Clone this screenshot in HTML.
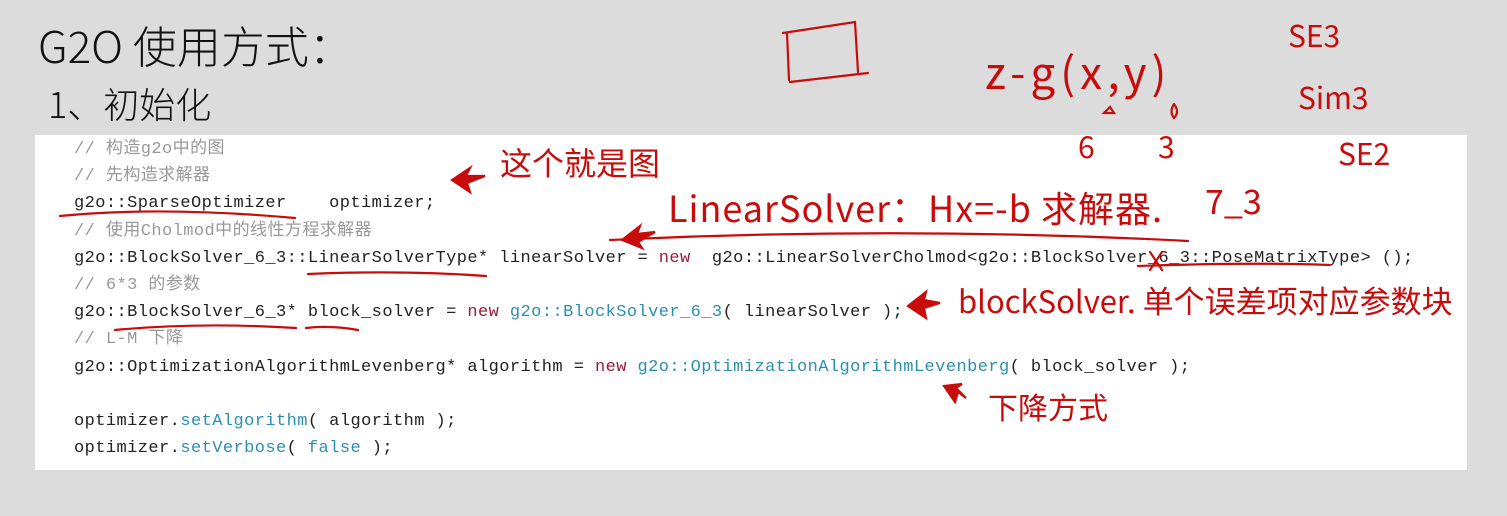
<!DOCTYPE html>
<html><head><meta charset="utf-8"><style>
body{margin:0;width:1507px;height:516px;background:#dcdcdc;position:relative;overflow:hidden;font-family:"Liberation Sans","Noto Sans CJK SC",sans-serif}
.box{position:absolute;left:35px;top:135px;width:1432px;height:335px;background:#fff}
.code{position:absolute;left:74px;top:136px;font-family:"Liberation Mono","Noto Sans CJK SC",monospace;font-size:17px;letter-spacing:0.43px;line-height:27.2px;color:#222;white-space:pre}
.c{color:#999}.k{color:#9b1b3b}.t{color:#2b8fb0}
.hw{position:absolute;color:#111;font-family:"Noto Sans CJK SC",sans-serif;font-weight:300;white-space:nowrap}
.r{position:absolute;color:#c80c0c;font-family:"Noto Sans CJK SC",sans-serif;font-weight:400;white-space:nowrap}
svg{position:absolute;left:0;top:0}
</style></head><body>
<div class="box"></div>
<div class="hw" style="left:38px;top:14px;font-size:44px;line-height:60px">G2O 使用方式：</div>
<div class="hw" style="left:48px;top:78px;font-size:36px;line-height:50px">1、初始化</div>
<div class="code"><span class="c">// 构造g2o中的图</span>
<span class="c">// 先构造求解器</span>
g2o::SparseOptimizer    optimizer;
<span class="c">// 使用Cholmod中的线性方程求解器</span>
g2o::BlockSolver_6_3::LinearSolverType* linearSolver = <span class="k">new</span>  g2o::LinearSolverCholmod&lt;g2o::BlockSolver_6_3::PoseMatrixType&gt; ();
<span class="c">// 6*3 的参数</span>
g2o::BlockSolver_6_3* block_solver = <span class="k">new</span> <span class="t">g2o::BlockSolver_6_3</span>( linearSolver );
<span class="c">// L-M 下降</span>
g2o::OptimizationAlgorithmLevenberg* algorithm = <span class="k">new</span> <span class="t">g2o::OptimizationAlgorithmLevenberg</span>( block_solver );

optimizer.<span class="t">setAlgorithm</span>( algorithm );
optimizer.<span class="t">setVerbose</span>( <span class="t">false</span> );</div>
<div class="r" style="left:500px;top:142px;font-size:32px;line-height:40px">这个就是图</div>
<div class="r" style="left:668px;top:184px;font-size:36px;line-height:46px;letter-spacing:1px">LinearSolver：Hx=-b 求解器.</div>
<div class="r" style="left:1205px;top:178px;font-size:34px;line-height:44px">7_3</div>
<div class="r" style="left:958px;top:279px;font-size:31px;line-height:42px">blockSolver. 单个误差项对应参数块</div>
<div class="r" style="left:988px;top:386px;font-size:30px;line-height:40px">下降方式</div>
<div class="r" style="left:985px;top:40px;font-size:44px;line-height:60px;letter-spacing:5px">z-g(x,y)</div>
<div class="r" style="left:1078px;top:125px;font-size:30px;line-height:40px">6</div>
<div class="r" style="left:1158px;top:125px;font-size:30px;line-height:40px">3</div>
<div class="r" style="left:1288px;top:14px;font-size:30px;line-height:40px">SE3</div>
<div class="r" style="left:1298px;top:76px;font-size:30px;line-height:40px">Sim3</div>
<div class="r" style="left:1338px;top:132px;font-size:30px;line-height:40px">SE2</div>
<svg width="1507" height="516" fill="none" stroke="#c80c0c" stroke-width="2.2" stroke-linecap="round">
<path d="M783 33 L855 22 L858 72 M787 33 L789 80 M790 82 L868 73"/>
<path d="M1110 107 l-6 6 h10 z M1174 104 q-5 8 0 14 q6 -6 0 -14"/>
<path d="M60 216 Q160 206 295 218"/>
<path d="M308 274 Q400 270 486 276"/>
<path d="M610 240 Q900 226 1188 241"/>
<path d="M1138 266 Q1250 262 1330 265"/>
<path d="M1150 252 L1162 270 M1162 252 L1150 270"/>
<path d="M115 330 Q200 322 296 328 M306 328 Q330 325 358 330"/>
<path fill="#c80c0c" d="M452 180 L470 168 L466 176 L485 176 L467 183 L470 192 Z"/>
<path fill="#c80c0c" d="M622 240 L640 226 L637 234 L655 232 L638 242 L642 248 Z"/>
<path fill="#c80c0c" d="M908 306 L926 292 L924 300 L940 303 L924 308 L926 318 Z"/>
<path fill="#c80c0c" d="M944 386 L955 402 L958 392 L966 398 L956 388 L962 384 Z"/>
</svg>
</body></html>
